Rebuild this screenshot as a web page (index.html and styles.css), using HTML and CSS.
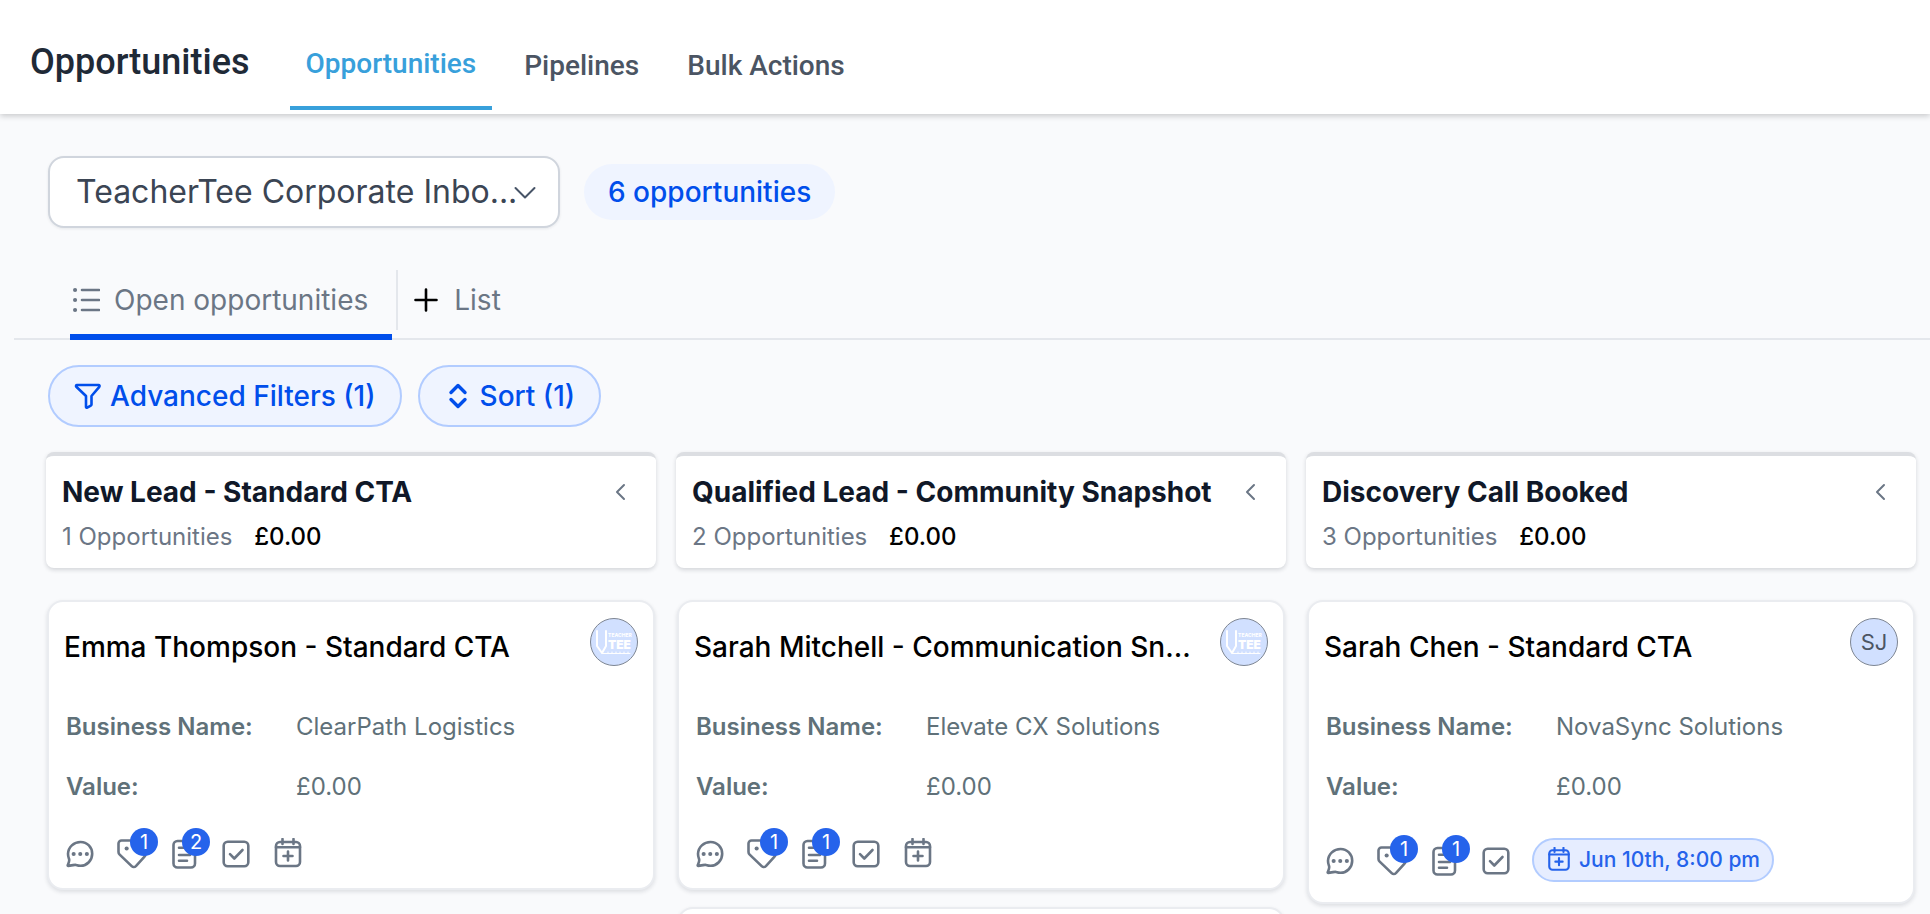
FILE: index.html
```html
<!DOCTYPE html>
<html lang="en">
	<head>
		<meta charset="UTF-8">
		<title>Opportunities</title>
		<link rel="stylesheet" href="styles.css">
	</head>
	<body>
		<svg class="sprite" aria-hidden="true">
			<symbol id="chat" viewBox="0 0 32 32">
				<path d="M16.600 4C23.200 4 28.200 9.200 28.200 15.800S23 27.800 16.600 27.800c-1.600 0-3-.3-4.400-.8-.5-.2-.9-.2-1.400-.1L4.200 27.900c-.4 0-.6-.2-.5-.6.700-1.700 1.400-3.200 1.500-4.800.1-.7 0-1.200-.3-1.900C4.300 19 4 17.400 4 15.800 4.300 9 9.800 4 16.600 4z"/>
				<path class="dots" d="M9.600 16h.1M16.200 16h.1M22.800 16h.1"/>
			</symbol>
			<symbol id="tag" viewBox="0 0 32 32">
				<path d="M2.500 5.500a3 3 0 0 1 3-3h8.700c1 0 1.800.3 2.500 1L28.500 15.300c1 1 1 2.400 0 3.400l-8.600 9.400c-1.200 1.200-3 1.200-4.200 0L3.700 16.600c-.8-.8-1.200-1.600-1.200-2.700z"/>
				<path class="dots" d="M10.600 10.400h.1"/>
			</symbol>
			<symbol id="note" viewBox="0 0 32 32">
				<rect x="5.500" y="3" width="21.500" height="26.500" rx="4"/>
				<path d="M11 9.800h10M11 17h11M11 22.700h8"/>
			</symbol>
			<symbol id="check" viewBox="0 0 32 32">
				<rect x="3.700" y="3.700" width="24.600" height="24.600" rx="4"/>
				<path d="M10 16.200l4.300 4.300 8.200-8.500"/>
			</symbol>
			<symbol id="calendar" viewBox="0 0 32 32">
				<rect x="4" y="4" width="24" height="24" rx="4"/>
				<path d="M4 9.200h24M10.500 1v5M21.500 1v5M16 13.500v9M11.500 18h9"/>
			</symbol>
			<symbol id="left" viewBox="0 0 16 20">
				<path d="M12 3L5 10l7 7"/>
			</symbol>
		</svg>

		<div class="app">
			<header class="top">
				<h1>Opportunities</h1>
				<nav>
					<a class="on" href="#">Opportunities</a>
					<a href="#">Pipelines</a>
					<a href="#">Bulk Actions</a>
				</nav>
			</header>

			<div class="picker">
				<div class="select">
					<select aria-label="Pipeline">
						<option>TeacherTee Corporate Inbo...</option>
					</select>
					<svg viewBox="0 0 22 14"><path d="M1.500 2L11 11.500 20.500 2"/></svg>
				</div>
				<span class="count">6 opportunities</span>
			</div>

			<div class="views">
				<button class="view on" type="button">
					<svg viewBox="0 0 28 28"><path d="M10 4h17M10 14h17M10 24h17"/><path class="dots" d="M3 4h.1M3 14h.1M3 24h.1"/></svg>
					Open opportunities
				</button>
				<button class="view add" type="button">
					<svg viewBox="0 0 24 28"><path d="M12 3.500v21M1.500 14h21"/></svg>
					List
				</button>
			</div>

			<div class="filters">
				<button type="button">
					<svg viewBox="0 0 28 28"><path d="M3 3h21.500c1 0 1.400 1 .8 1.800L17.500 14v8.500c0 .5-.3.9-.7 1.100l-3.600 2c-.6.300-1.200 0-1.200-.7V14L2.300 4.800C1.700 4 2 3 3 3z"/></svg>
					Advanced Filters (1)
				</button>
				<button class="sort" type="button">
					<svg viewBox="0 0 28 28"><path d="M7 10.500l7-7 7 7M7 17.500l7 7 7-7"/></svg>
					Sort (1)
				</button>
			</div>

			<main class="board">
				<section class="column">
					<div class="stage">
						<div class="stage_name">
							<h2>New Lead - Standard CTA</h2>
							<button type="button" aria-label="Collapse"><svg><use href="#left"/></svg></button>
						</div>
						<p>1 Opportunities <b>£0.00</b></p>
					</div>
					<article class="card">
						<div class="card_top">
							<h3>Emma Thompson - Standard CTA</h3>
							<span class="avatar">
								<svg viewBox="0 0 46 46">
									<path class="pencil" d="M6 12v15l5 7 4-7V12"/>
									<path d="M11 34.500h28M17 34v-1M21 34v-1M25 34v-1M29 34v-1M33 34v-1M37 34v-1"/>
									<text class="logo_top" x="17" y="18">TEACHER</text>
									<text class="logo_main" x="17" y="30">TEE</text>
								</svg>
							</span>
						</div>
						<dl>
							<dt>Business Name:</dt><dd>ClearPath Logistics</dd>
							<dt>Value:</dt><dd>£0.00</dd>
						</dl>
						<div class="actions">
							<button type="button" aria-label="Messages"><svg><use href="#chat"/></svg></button>
							<button type="button" aria-label="Tags"><svg><use href="#tag"/></svg><i>1</i></button>
							<button type="button" aria-label="Notes"><svg><use href="#note"/></svg><i>2</i></button>
							<button type="button" aria-label="Tasks"><svg><use href="#check"/></svg></button>
							<button type="button" aria-label="Appointments"><svg><use href="#calendar"/></svg></button>
						</div>
					</article>
				</section>

				<section class="column">
					<div class="stage">
						<div class="stage_name">
							<h2>Qualified Lead - Community Snapshot</h2>
							<button type="button" aria-label="Collapse"><svg><use href="#left"/></svg></button>
						</div>
						<p>2 Opportunities <b>£0.00</b></p>
					</div>
					<article class="card">
						<div class="card_top">
							<h3>Sarah Mitchell - Communication Sn...</h3>
							<span class="avatar">
								<svg viewBox="0 0 46 46">
									<path class="pencil" d="M6 12v15l5 7 4-7V12"/>
									<path d="M11 34.500h28M17 34v-1M21 34v-1M25 34v-1M29 34v-1M33 34v-1M37 34v-1"/>
									<text class="logo_top" x="17" y="18">TEACHER</text>
									<text class="logo_main" x="17" y="30">TEE</text>
								</svg>
							</span>
						</div>
						<dl>
							<dt>Business Name:</dt><dd>Elevate CX Solutions</dd>
							<dt>Value:</dt><dd>£0.00</dd>
						</dl>
						<div class="actions">
							<button type="button" aria-label="Messages"><svg><use href="#chat"/></svg></button>
							<button type="button" aria-label="Tags"><svg><use href="#tag"/></svg><i>1</i></button>
							<button type="button" aria-label="Notes"><svg><use href="#note"/></svg><i>1</i></button>
							<button type="button" aria-label="Tasks"><svg><use href="#check"/></svg></button>
							<button type="button" aria-label="Appointments"><svg><use href="#calendar"/></svg></button>
						</div>
					</article>
					<article class="card"></article>
				</section>

				<section class="column">
					<div class="stage">
						<div class="stage_name">
							<h2>Discovery Call Booked</h2>
							<button type="button" aria-label="Collapse"><svg><use href="#left"/></svg></button>
						</div>
						<p>3 Opportunities <b>£0.00</b></p>
					</div>
					<article class="card">
						<div class="card_top">
							<h3>Sarah Chen - Standard CTA</h3>
							<span class="avatar">SJ</span>
						</div>
						<dl>
							<dt>Business Name:</dt><dd>NovaSync Solutions</dd>
							<dt>Value:</dt><dd>£0.00</dd>
						</dl>
						<div class="actions">
							<button type="button" aria-label="Messages"><svg><use href="#chat"/></svg></button>
							<button type="button" aria-label="Tags"><svg><use href="#tag"/></svg><i>1</i></button>
							<button type="button" aria-label="Notes"><svg><use href="#note"/></svg><i>1</i></button>
							<button type="button" aria-label="Tasks"><svg><use href="#check"/></svg></button>
							<button class="date" type="button"><svg><use href="#calendar"/></svg>Jun 10th, 8:00 pm</button>
						</div>
					</article>
				</section>
			</main>
		</div>
	</body>
</html>
```
FILE: styles.css
```css
*{box-sizing: border-box;}
body, h1, h2, h3, p, dl, dd{margin: 0;}
body{background: #f9fafc; color: #000; font: 28px/40px Inter, "Liberation Sans", sans-serif;}
button{padding: 0; border: 0; background: none; color: inherit; font: inherit; cursor: pointer;}
svg{display: block; flex: none; fill: none; stroke: currentColor; stroke-width: 2.6; stroke-linecap: round; stroke-linejoin: round;}
.sprite{position: absolute; width: 0; height: 0;}
.dots{stroke-width: 4;}
.app{height: 100vh; overflow: hidden;}

/* header */
.top{display: flex; height: 114px; padding-left: 30px; background: #fff; box-shadow: 0 2px 6px rgba(0,0,0,.2); font-family: Roboto, sans-serif;}
.top h1{padding-top: 42px; color: #1f2a37; font-size: 36px; font-weight: 500;}
.top nav{display: flex; gap: 16px; padding-left: 40px;}
.top a{height: 110px; padding: 46px 16px 0; color: #4b5563; font-weight: 500; text-decoration: none;}
.top a.on{padding-top: 44px; border-bottom: 4px solid #38a0db; color: #38a0db;}

/* pipeline select */
.picker{display: flex; align-items: center; gap: 24px; padding: 42px 48px 0;}
.select{position: relative; width: 512px;}
.select select{width: 100%; height: 72px; padding: 0 40px 0 26px; border: 2px solid #d0d5dd; border-radius: 16px; appearance: none; background: #fff; box-shadow: 0 1px 3px rgba(16,24,40,.08); color: #3b4554; font: 32px/40px Inter, sans-serif;}
.select svg{position: absolute; right: 24px; top: 30px; width: 22px; height: 14px; color: #475467; stroke-width: 2; pointer-events: none;}
.count{padding: 8px 24px; border-radius: 28px; background: #eff4ff; color: #004eeb; font-weight: 500;}

/* views */
.views{display: flex; height: 70px; margin: 42px 0 0 14px; padding-left: 56px; border-bottom: 2px solid #e4e7ec;}
.view{display: flex; align-items: center; height: 60px; color: #6b7685;}
.view svg{width: 28px; height: 28px;}
.view.on{gap: 14px; height: 70px; padding: 0 24px 4px 2px; border-bottom: 6px solid #004eeb;}
.view.add{gap: 16px; margin-left: 4px; padding-left: 16px; border-left: 2px solid #e4e7ec;}
.view.add svg{width: 24px; color: #000;}

/* filters */
.filters{display: flex; gap: 16px; padding: 25px 48px;}
.filters button{display: flex; align-items: center; gap: 8px; height: 62px; padding: 0 24px; border: 2px solid #b2ccff; border-radius: 31px; background: #eff4ff; color: #004eeb; font-weight: 500;}
.filters svg{width: 28px; height: 28px;}
.filters .sort svg{stroke-width: 3.4;}

/* board */
.board{display: grid; grid-template-columns: repeat(3, 1fr); gap: 20px; padding: 0 14px 0 46px;}
.column{min-width: 0;}
.stage{height: 116px; margin-bottom: 32px; padding: 16px; border-top: 4px solid #dcdee2; border-radius: 8px; background: #fff; box-shadow: 0 2px 4px rgba(16,24,40,.16);}
.stage_name{display: flex; justify-content: space-between; align-items: center; padding-right: 12px;}
.stage h2{color: #101828; font-size: 28px; font-weight: 700;}
.stage button{color: #6b7685;}
.stage button svg{width: 16px; height: 20px; stroke-width: 2;}
.stage p{padding-top: 5px; color: #6b7685; font-size: 24px;}
.stage b{margin-left: 15px; color: #000; font-weight: 500;}

.card{min-height: 290px; margin: 0 1px 17px; padding: 16px 15px 18px; border: 2px solid #eaecf0; border-radius: 16px; background: #fff; box-shadow: 0 2px 4px rgba(16,24,40,.12);}
.card_top{display: flex; justify-content: space-between; height: 84px;}
.card h3{padding-top: 9px; font-size: 28px; font-weight: 500; white-space: nowrap;}
.avatar{display: flex; justify-content: center; align-items: center; flex: none; width: 48px; height: 48px; border: 1px solid #7d8592; border-radius: 50%; background: #d1e0ff; color: #4b5563; font-size: 22px;}
.avatar svg{width: 46px; height: 46px; color: #fff; stroke-width: 1;}
.avatar .pencil{stroke-width: 2;}
.logo_top, .logo_main{fill: #fff; stroke: none; font: 800 5px Inter, sans-serif;}
.logo_main{font-size: 12px; font-weight: 900;}
.card dl{display: grid; grid-template-columns: 230px 1fr; row-gap: 20px; padding: 5px 0 0 2px; color: #607179; font-size: 24px;}
.card dt{font-weight: 600;}
.actions{display: flex; align-items: center; gap: 20px; padding-top: 31px;}
.actions button{position: relative; color: #6b7685;}
.actions svg{width: 32px; height: 32px;}
.actions i{position: absolute; left: 14px; top: -10px; width: 28px; height: 28px; border-radius: 50%; background: #2563eb; color: #fff; font-size: 20px; font-style: normal; line-height: 28px; text-align: center;}
.actions .date{display: flex; align-items: center; gap: 7px; height: 44px; margin-bottom: 2px; padding: 0 12px; border: 2px solid #b2ccff; border-radius: 22px; background: #e6edff; color: #2563eb; font-size: 21px; font-weight: 500;}
.actions .date svg{width: 26px; height: 26px;}
```
